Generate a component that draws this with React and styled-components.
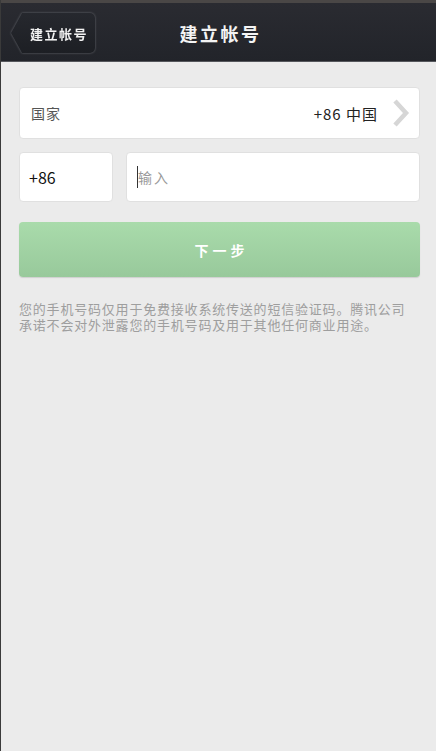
import React from "react";
import styled, { createGlobalStyle } from "styled-components";

const GlobalStyle = createGlobalStyle`
  html, body {
    margin: 0;
    padding: 0;
    background: #ebebeb;
  }
  body {
    font-family: "Noto Sans CJK SC", "Noto Sans", sans-serif;
  }
`;

export default function App() {
  return (
    <Page>
      <GlobalStyle />
      <Header>
        <BackWrap>
          <BackButton>建立帐号</BackButton>
        </BackWrap>
        <Title>建立帐号</Title>
      </Header>
      <Content>
        <Card>
          <Label>国家</Label>
          <Country>+86 中国</Country>
          <Chevron viewBox="0 0 20 30">
            <path d="M4 3 L15 15 L4 27" fill="none" stroke="#d6d6d6" strokeWidth="4.5" />
          </Chevron>
        </Card>
        <PhoneRow>
          <CodeBox>+86</CodeBox>
          <InputBox>
            <Caret />
            <Placeholder>输入</Placeholder>
          </InputBox>
        </PhoneRow>
        <NextButton>下一步</NextButton>
        <Notice>
          您的手机号码仅用于免费接收系统传送的短信验证码。腾讯公司承诺不会对外泄露您的手机号码及用于其他任何商业用途。
        </Notice>
      </Content>
    </Page>
  );
}

const Page = styled.div`
  width: 436px;
  height: 751px;
  box-sizing: border-box;
  border-left: 1px solid #3a3a3a;
  background: #ebebeb;
  overflow: hidden;
`;

const Header = styled.div`
  height: 62px;
  box-sizing: border-box;
  border-top: 3px solid #4a4746;
  border-bottom: 1px solid #55575c;
  background: linear-gradient(#2a2b31, #22242a);
  position: relative;
  display: flex;
  align-items: center;
  padding-left: 10px;
`;

const BackWrap = styled.div`
  filter: drop-shadow(0 0 0.8px #6a6c72);
`;

const BackButton = styled.div`
  width: 84px;
  height: 40px;
  margin-top: 2px;
  box-sizing: border-box;
  padding-left: 19px;
  display: flex;
  align-items: center;
  background: linear-gradient(#26282e, #1d1f24);
  clip-path: polygon(11px 0, 100% 0, 100% 100%, 11px 100%, 0 50%);
  border-radius: 0 5px 5px 0;
  color: #f2f2f2;
  font-size: 13px;
  font-weight: 700;
  letter-spacing: 1.5px;
`;

const Title = styled.div`
  position: absolute;
  left: 0;
  right: 0;
  top: 17px;
  text-align: center;
  color: #f4f4f4;
  font-size: 18px;
  font-weight: 700;
  letter-spacing: 2.5px;
  padding-left: 4px;
  pointer-events: none;
`;

const Content = styled.div`
  padding: 25px 16px 0 18px;
  display: flex;
  flex-direction: column;
`;

const Card = styled.div`
  height: 50px;
  background: #fff;
  border: 1px solid #e0e0e0;
  border-radius: 4px;
  display: flex;
  align-items: center;
  padding: 0 8px 0 11px;
`;

const Label = styled.div`
  flex: 1;
  color: #555;
  font-size: 14px;
  letter-spacing: 1px;
`;

const Country = styled.div`
  color: #222;
  font-size: 15px;
  letter-spacing: 1px;
  margin-right: 13px;
`;

const Chevron = styled.svg`
  width: 20px;
  height: 30px;
`;

const PhoneRow = styled.div`
  display: flex;
  gap: 13px;
  margin-top: 13px;
`;

const CodeBox = styled.div`
  width: 94px;
  height: 50px;
  box-sizing: border-box;
  background: #fff;
  border: 1px solid #e0e0e0;
  border-radius: 4px;
  display: flex;
  align-items: center;
  padding-left: 9px;
  color: #111;
  font-size: 16px;
`;

const InputBox = styled.div`
  flex: 1;
  height: 50px;
  box-sizing: border-box;
  background: #fff;
  border: 1px solid #e0e0e0;
  border-radius: 4px;
  display: flex;
  align-items: center;
  padding-left: 10px;
`;

const Caret = styled.div`
  width: 1px;
  height: 22px;
  background: #333;
`;

const Placeholder = styled.div`
  color: #9a9a9a;
  font-size: 14px;
  letter-spacing: 2px;
`;

const NextButton = styled.div`
  margin-top: 20px;
  height: 55px;
  border-radius: 4px;
  background: linear-gradient(#a9dbab, #98c99b);
  box-shadow: 0 1px 1px rgba(0, 0, 0, 0.12);
  display: flex;
  align-items: center;
  justify-content: center;
  color: #fff;
  font-size: 14px;
  font-weight: 700;
  letter-spacing: 4px;
  padding-left: 4px;
`;

const Notice = styled.div`
  margin-top: 24px;
  width: 395px;
  color: #9e9e9e;
  font-size: 13px;
  line-height: 16px;
  letter-spacing: 0.8px;
`;
